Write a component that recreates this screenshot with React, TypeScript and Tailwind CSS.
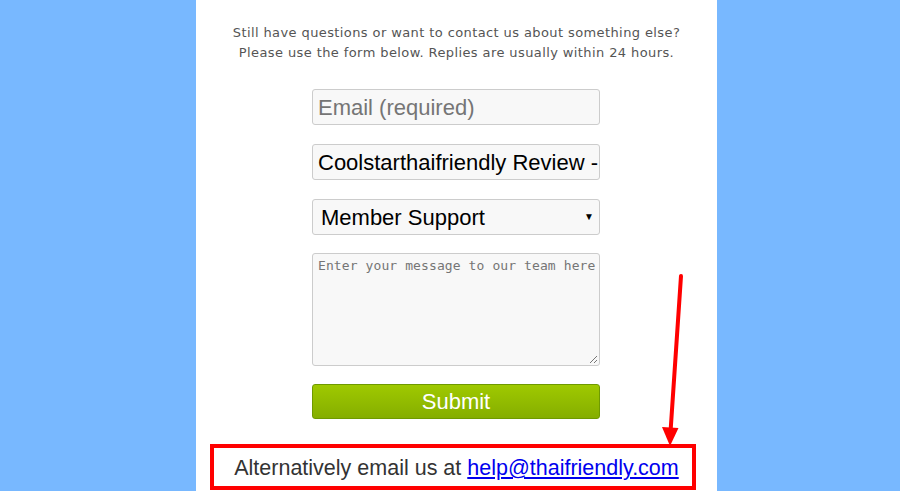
import React from "react";

export default function App() {
  return (
    <div className="relative w-[900px] h-[491px] overflow-hidden bg-[#78b8ff] flex">
      <div className="ml-[196px] w-[521px] h-full bg-white flex flex-col items-center">
        <div
          className="pt-[23px] text-[13px] leading-[20px] tracking-[0.4px] text-[#555] text-center"
          style={{ fontFamily: '"DejaVu Sans", Verdana, sans-serif' }}
        >
          <div>Still have questions or want to contact us about something else?</div>
          <div>Please use the form below. Replies are usually within 24 hours.</div>
        </div>
        <div
          className="self-start ml-[116px] w-[288px] mt-[26px] flex flex-col"
          style={{ fontFamily: '"Liberation Sans", Arial, sans-serif' }}
        >
          <div className="h-[36px] border border-[#ccc] rounded-[3px] bg-[#f8f8f8] px-[5px] flex items-center text-[22px] text-[#757575]">
            Email (required)
          </div>
          <div className="h-[36px] mt-[19px] border border-[#ccc] rounded-[3px] bg-[#f8f8f8] px-[5px] flex items-center text-[22px] text-black whitespace-nowrap overflow-hidden">
            Coolstarthaifriendly Review -
          </div>
          <div className="h-[36px] mt-[19px] border border-[#ccc] rounded-[3px] bg-[#f8f8f8] pl-[8px] pr-[5px] flex items-center justify-between text-[22px] text-black">
            <span>Member Support</span>
            <span className="text-[10px] leading-none">▼</span>
          </div>
          <div className="relative h-[113px] mt-[18px] border border-[#ccc] rounded-[3px] bg-[#f8f8f8] px-[5px] pt-[4px]">
            <div
              className="text-[13px] leading-[16px] tracking-[0.1px] text-[#757575] whitespace-nowrap"
              style={{ fontFamily: '"DejaVu Sans Mono", Consolas, monospace' }}
            >
              Enter your message to our team here
            </div>
            <svg className="absolute right-[1px] bottom-[1px]" width="9" height="9" viewBox="0 0 9 9">
              <line x1="1" y1="8" x2="8" y2="1" stroke="#777" strokeWidth="1" />
              <line x1="5" y1="8" x2="8" y2="5" stroke="#777" strokeWidth="1" />
            </svg>
          </div>
          <div className="h-[35px] mt-[18px] rounded-[3px] border border-[#6f9a00] bg-gradient-to-b from-[#9fc900] to-[#85ae00] flex items-center justify-center text-white text-[22px]">
            Submit
          </div>
        </div>
        <div
          className="mt-[37px] text-[21.5px] leading-[24px] text-[#333] text-center whitespace-nowrap"
          style={{ fontFamily: '"Liberation Sans", Arial, sans-serif' }}
        >
          Alternatively email us at{" "}
          <a href="#" className="text-[#0000ee] underline">
            help@thaifriendly.com
          </a>
        </div>
      </div>
      <div className="absolute left-[210px] top-[444px] w-[486px] h-[46px] border-[4px] border-[#ff0000] pointer-events-none" />
      <svg className="absolute left-0 top-0 pointer-events-none" width="900" height="491">
        <line x1="681" y1="276" x2="670.5" y2="432" stroke="#ff0000" strokeWidth="4" strokeLinecap="round" />
        <polygon points="662,427 678.5,428 670,446" fill="#ff0000" />
      </svg>
    </div>
  );
}
